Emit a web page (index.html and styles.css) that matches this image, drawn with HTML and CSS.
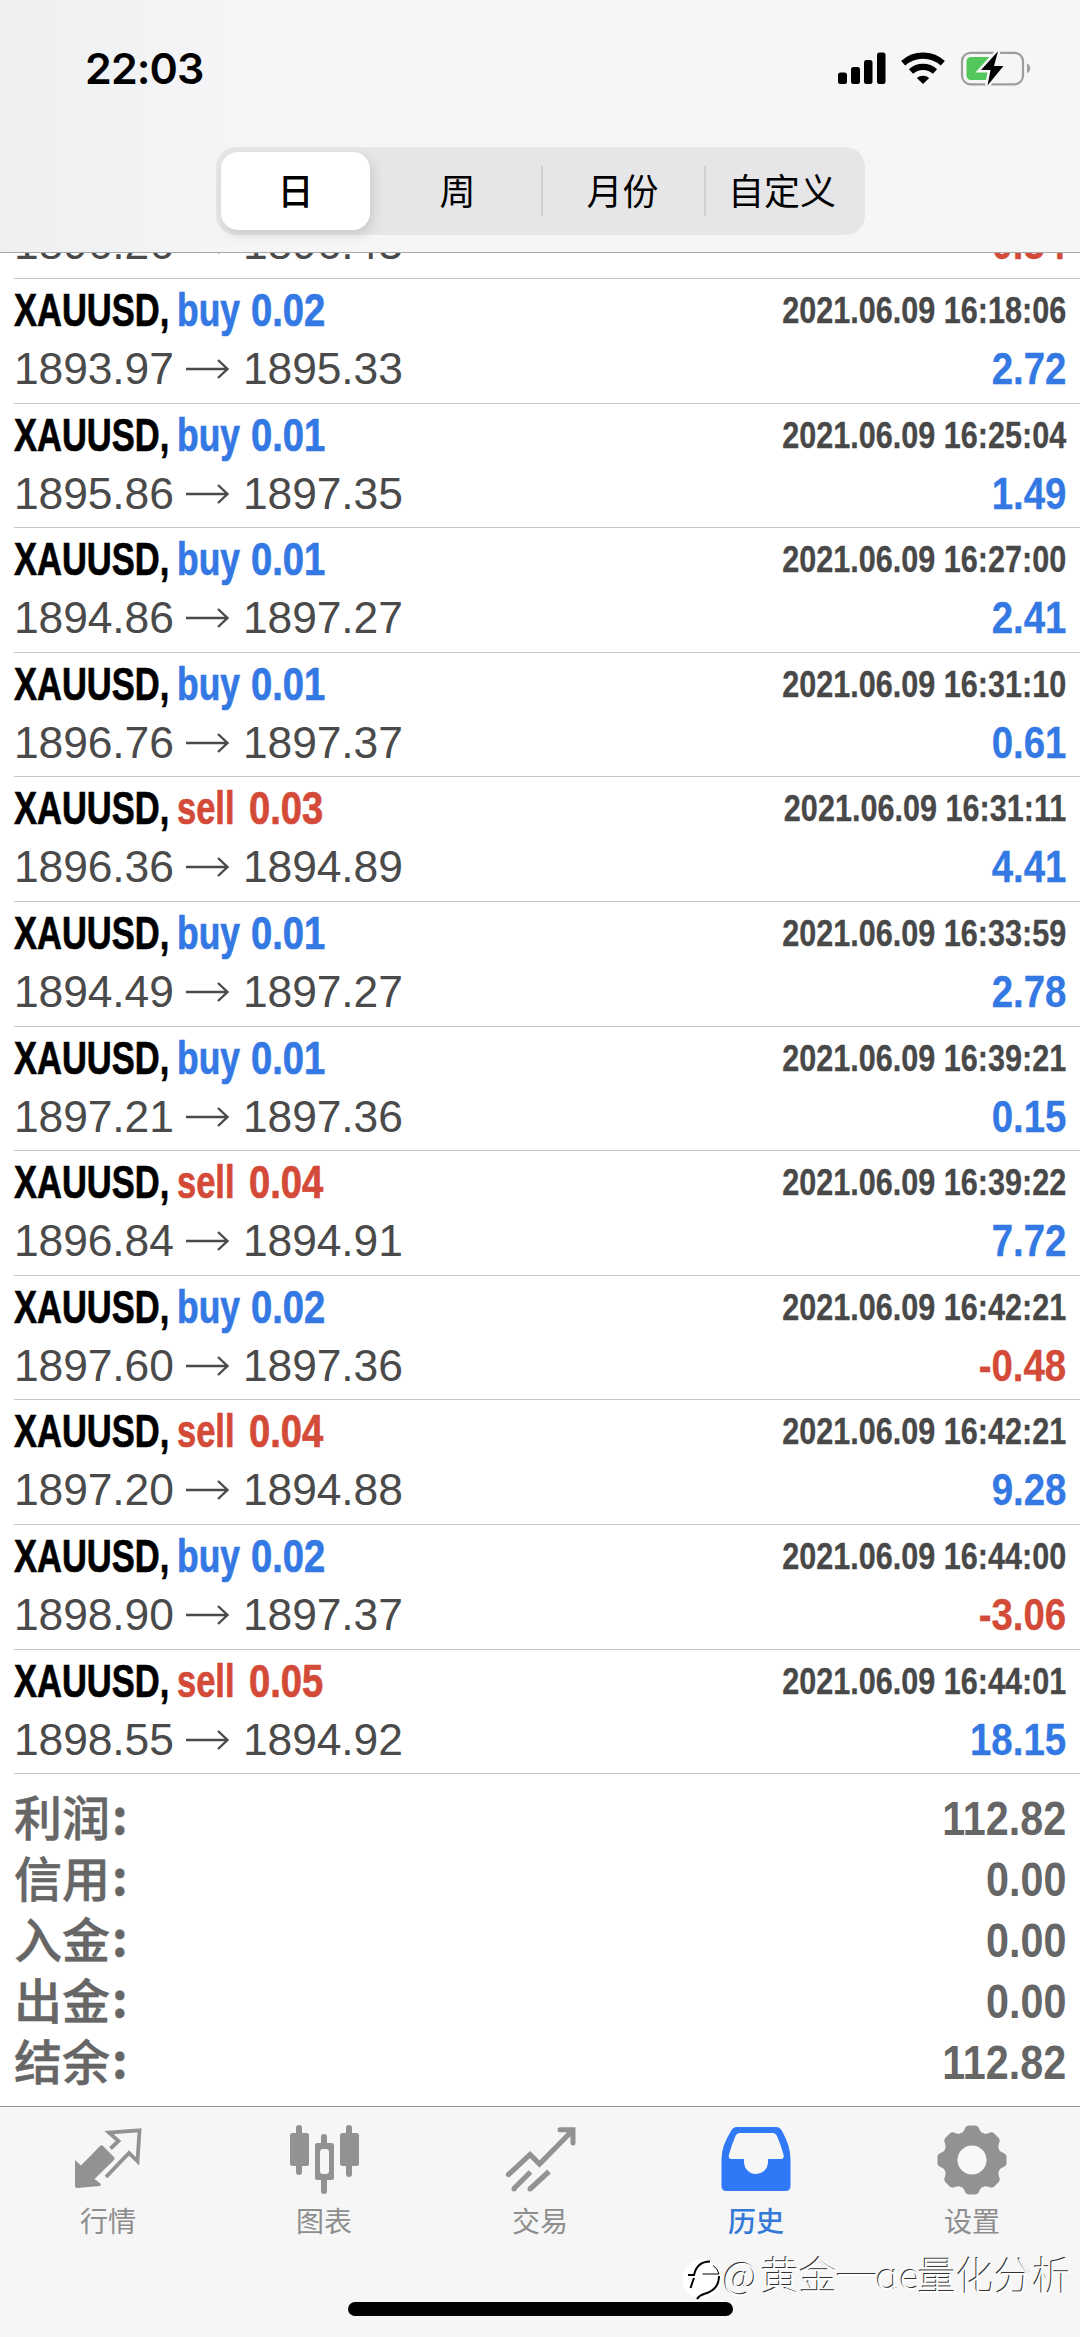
FILE: index.html
```html
<!DOCTYPE html>
<html lang="zh-CN">
<head>
<meta charset="utf-8">
<title>历史</title>
<link rel="stylesheet" href="styles.css">
</head>
<body>
<div class="screen">
  <header class="header">
    <div class="status">
      <span class="clock">22:03</span>
      <svg class="status-icons" width="194" height="36" viewBox="0 0 194 36">
        <g fill="#000">
          <rect x="1" y="22.500" width="9" height="11.500" rx="2.500"/>
          <rect x="14" y="17" width="9" height="17" rx="2.500"/>
          <rect x="27" y="10" width="8.500" height="24" rx="2.500"/>
          <rect x="40" y="2.500" width="8.500" height="31.500" rx="2.500"/>
        </g>
        <g fill="none" stroke="#000" stroke-width="6.200">
          <path d="M66.200 13.200a29.500 29.500 0 0 1 39.600 0"/>
          <path d="M74 21.500a18 18 0 0 1 24 0"/>
        </g>
        <path d="M79.800 28a9.500 9.500 0 0 1 12.400 0L86 34z"/>
        <rect x="125" y="2.800" width="61" height="31.500" rx="8.500" fill="none" stroke="#9d9da0" stroke-width="2.200"/>
        <path d="M190 13.500c4.300 1.500 4.300 8 0 9.500z" fill="#9d9da0"/>
        <rect x="129.500" y="7" width="26" height="23" rx="4.500" fill="#54c75c"/>
        <path d="M161 1.200L144 20h9.500L150.500 35.500 166.500 16H157z" fill="#000" stroke="#f6f6f7" stroke-width="5" paint-order="stroke"/>
      </svg>
    </div>
    <nav class="segments">
      <span class="segment active">日</span>
      <span class="segment week">周</span>
      <span class="segment">月份</span>
      <span class="segment">自定义</span>
    </nav>
  </header>

  <main class="history">
    <div class="deal clipped"><div class="bottom"><span class="price">1896.26</span><svg class="arrow" viewBox="0 0 44 20"><path d="M0 10H42M32 1l9.500 9-9.500 9"/></svg><span class="price">1896.43</span><span class="profit neg">-0.34</span></div></div>
    <div class="deal"><div class="top"><span class="sym">XAUUSD,</span><span class="side buy">buy</span><span class="vol buy">0.02</span><time>2021.06.09 16:18:06</time></div><div class="bottom"><span class="price">1893.97</span><svg class="arrow" viewBox="0 0 44 20"><path d="M0 10H42M32 1l9.500 9-9.500 9"/></svg><span class="price">1895.33</span><span class="profit">2.72</span></div></div>
    <div class="deal"><div class="top"><span class="sym">XAUUSD,</span><span class="side buy">buy</span><span class="vol buy">0.01</span><time>2021.06.09 16:25:04</time></div><div class="bottom"><span class="price">1895.86</span><svg class="arrow" viewBox="0 0 44 20"><path d="M0 10H42M32 1l9.500 9-9.500 9"/></svg><span class="price">1897.35</span><span class="profit">1.49</span></div></div>
    <div class="deal"><div class="top"><span class="sym">XAUUSD,</span><span class="side buy">buy</span><span class="vol buy">0.01</span><time>2021.06.09 16:27:00</time></div><div class="bottom"><span class="price">1894.86</span><svg class="arrow" viewBox="0 0 44 20"><path d="M0 10H42M32 1l9.500 9-9.500 9"/></svg><span class="price">1897.27</span><span class="profit">2.41</span></div></div>
    <div class="deal"><div class="top"><span class="sym">XAUUSD,</span><span class="side buy">buy</span><span class="vol buy">0.01</span><time>2021.06.09 16:31:10</time></div><div class="bottom"><span class="price">1896.76</span><svg class="arrow" viewBox="0 0 44 20"><path d="M0 10H42M32 1l9.500 9-9.500 9"/></svg><span class="price">1897.37</span><span class="profit">0.61</span></div></div>
    <div class="deal"><div class="top"><span class="sym">XAUUSD,</span><span class="side sell">sell</span><span class="vol sell">0.03</span><time>2021.06.09 16:31:11</time></div><div class="bottom"><span class="price">1896.36</span><svg class="arrow" viewBox="0 0 44 20"><path d="M0 10H42M32 1l9.500 9-9.500 9"/></svg><span class="price">1894.89</span><span class="profit">4.41</span></div></div>
    <div class="deal"><div class="top"><span class="sym">XAUUSD,</span><span class="side buy">buy</span><span class="vol buy">0.01</span><time>2021.06.09 16:33:59</time></div><div class="bottom"><span class="price">1894.49</span><svg class="arrow" viewBox="0 0 44 20"><path d="M0 10H42M32 1l9.500 9-9.500 9"/></svg><span class="price">1897.27</span><span class="profit">2.78</span></div></div>
    <div class="deal"><div class="top"><span class="sym">XAUUSD,</span><span class="side buy">buy</span><span class="vol buy">0.01</span><time>2021.06.09 16:39:21</time></div><div class="bottom"><span class="price">1897.21</span><svg class="arrow" viewBox="0 0 44 20"><path d="M0 10H42M32 1l9.500 9-9.500 9"/></svg><span class="price">1897.36</span><span class="profit">0.15</span></div></div>
    <div class="deal"><div class="top"><span class="sym">XAUUSD,</span><span class="side sell">sell</span><span class="vol sell">0.04</span><time>2021.06.09 16:39:22</time></div><div class="bottom"><span class="price">1896.84</span><svg class="arrow" viewBox="0 0 44 20"><path d="M0 10H42M32 1l9.500 9-9.500 9"/></svg><span class="price">1894.91</span><span class="profit">7.72</span></div></div>
    <div class="deal"><div class="top"><span class="sym">XAUUSD,</span><span class="side buy">buy</span><span class="vol buy">0.02</span><time>2021.06.09 16:42:21</time></div><div class="bottom"><span class="price">1897.60</span><svg class="arrow" viewBox="0 0 44 20"><path d="M0 10H42M32 1l9.500 9-9.500 9"/></svg><span class="price">1897.36</span><span class="profit neg">-0.48</span></div></div>
    <div class="deal"><div class="top"><span class="sym">XAUUSD,</span><span class="side sell">sell</span><span class="vol sell">0.04</span><time>2021.06.09 16:42:21</time></div><div class="bottom"><span class="price">1897.20</span><svg class="arrow" viewBox="0 0 44 20"><path d="M0 10H42M32 1l9.500 9-9.500 9"/></svg><span class="price">1894.88</span><span class="profit">9.28</span></div></div>
    <div class="deal"><div class="top"><span class="sym">XAUUSD,</span><span class="side buy">buy</span><span class="vol buy">0.02</span><time>2021.06.09 16:44:00</time></div><div class="bottom"><span class="price">1898.90</span><svg class="arrow" viewBox="0 0 44 20"><path d="M0 10H42M32 1l9.500 9-9.500 9"/></svg><span class="price">1897.37</span><span class="profit neg">-3.06</span></div></div>
    <div class="deal"><div class="top"><span class="sym">XAUUSD,</span><span class="side sell">sell</span><span class="vol sell">0.05</span><time>2021.06.09 16:44:01</time></div><div class="bottom"><span class="price">1898.55</span><svg class="arrow" viewBox="0 0 44 20"><path d="M0 10H42M32 1l9.500 9-9.500 9"/></svg><span class="price">1894.92</span><span class="profit">18.15</span></div></div>

    <dl class="totals">
      <div class="total"><dt>利润<i>:</i></dt><dd>112.82</dd></div>
      <div class="total"><dt>信用<i>:</i></dt><dd>0.00</dd></div>
      <div class="total"><dt>入金<i>:</i></dt><dd>0.00</dd></div>
      <div class="total"><dt>出金<i>:</i></dt><dd>0.00</dd></div>
      <div class="total"><dt>结余<i>:</i></dt><dd>112.82</dd></div>
    </dl>
  </main>

  <footer class="tabbar">
    <a class="tab">
      <svg width="72" height="72" viewBox="0 0 72 72">
        <path d="M3 35l6 5.500 19-19.500q1.500-1.500 3 0l11 11q1.200 1.500 0 3L22.500 54l6.500 5-1 2L5 63q-2 0-2-2z" fill="#929292"/>
        <path d="M38.500 23.500l8-7.500-9.500-8.500 30.500-2.200-2 31-8.500-8.300L34 52" fill="none" stroke="#929292" stroke-width="3.800"/>
      </svg>
      <span>行情</span>
    </a>
    <a class="tab">
      <svg width="72" height="72" viewBox="0 0 72 72" fill="#929292">
        <rect x="8" y="0" width="6" height="50" rx="3"/><rect x="2" y="8" width="19" height="33" rx="2.500"/>
        <rect x="58" y="0" width="6" height="52" rx="3"/><rect x="52" y="8" width="19" height="33" rx="2.500"/>
        <rect x="33" y="9" width="6" height="60" rx="3"/><rect x="27" y="18" width="19" height="37" rx="2.500"/>
        <rect x="32" y="24" width="9" height="25" rx="3" fill="#f6f6f6"/>
      </svg>
      <span>图表</span>
    </a>
    <a class="tab">
      <svg width="72" height="72" viewBox="0 0 72 72" fill="none" stroke="#929292" stroke-width="5.200">
        <path d="M4.500 49.500l21.500-20 9.500 9.500L66 8" stroke-linecap="round"/>
        <path d="M56 4.800H69V18" stroke-width="5" stroke-linecap="round"/><path d="M58 3H71V16z" fill="#929292" stroke="none"/>
        <path d="M9.500 64l17-17M26 64l19-17.500" /><circle cx="10" cy="64" r="1" stroke-width="3"/><circle cx="26" cy="64" r="1" stroke-width="3"/>
      </svg>
      <span>交易</span>
    </a>
    <a class="tab current">
      <svg width="72" height="72" viewBox="0 0 72 72">
        <path fill-rule="evenodd" fill="#2f79f7" d="M17 2H56q4 0 6 4 8.500 15 8.500 28V61q0 5-5 5H6.500q-5 0-5-5V34Q1.500 21 11 6q2-4 6-4zM20 8q-3 0-4.500 3Q12 19 9 29.500q-1 4.500 2 4.500H24v3a12 12 0 0 0 24 0v-3H61q3.500 0 2.500-4.500Q60.500 19 57 11q-1.500-3-4.500-3z"/>
      </svg>
      <span>历史</span>
    </a>
    <a class="tab">
      <svg width="72" height="72" viewBox="-36 -35 72 72" fill="#929292">
        <defs><path id="tooth" d="M-12-26.500Q-9-27-7.500-30.500-6-34.500-3-34.500H3Q6-34.500 7.500-30.500 9-27 12-26.500V0H-12z"/></defs>
        <circle r="28.500"/>
        <g><use href="#tooth"/><use href="#tooth" transform="rotate(45)"/><use href="#tooth" transform="rotate(90)"/><use href="#tooth" transform="rotate(135)"/><use href="#tooth" transform="rotate(180)"/><use href="#tooth" transform="rotate(225)"/><use href="#tooth" transform="rotate(270)"/><use href="#tooth" transform="rotate(315)"/></g>
        <circle r="14.500" fill="#f8f8f8"/>
      </svg>
      <span>设置</span>
    </a>
    <div class="home"></div>
    <div class="watermark">
      <svg width="42" height="46" viewBox="0 0 42 46">
        <circle cx="20" cy="21" r="19.500" fill="#fff"/>
        <g fill="none" stroke="#000" stroke-width="2">
          <path d="M28 3.500q-13 0-16 13.500H6M12 20q-1.500 4-3.500 10"/>
          <path d="M20.500 16H37q-1.500-6-6-8.500" stroke-width="1"/>
          <path d="M37 18q0 14-15 18-5 1.500-7 5"/>
        </g>
      </svg>
      <span class="at">@</span><span>黄金</span><span class="dash">一</span><span class="latin">ɑe</span><span>量化分析</span>
    </div>
  </footer>
</div>
</body>
</html>
```
FILE: styles.css
```css
* { box-sizing: border-box; }
body {
  margin: 0;
  background: #fff;
  font-family: "Liberation Sans", "Noto Sans CJK SC", sans-serif;
}
.screen {
  width: 1080px;
  height: 2337px;
  display: flex;
  flex-direction: column;
  overflow: hidden;
}
.header {
  flex: none;
  height: 253px;
  border-bottom: 1px solid #a9a9ac;
  background: linear-gradient(90deg, #f0f0f0 0, #f1f2f3 110px, #f5f5f7 220px, #f7f6f6 420px, #f6f6f7 1080px);
}
.status {
  height: 147px;
  padding: 50px 49px 0 85px;
  display: flex;
  justify-content: space-between;
  align-items: flex-start;
}
.clock {
  font: 600 43px/37px Inter, "Liberation Sans", sans-serif;
  letter-spacing: -.9px;
}
.segments {
  width: 649px;
  height: 88px;
  margin-left: 216px;
  padding: 5px;
  border-radius: 20px;
  background: #e6e6e8;
  display: grid;
  grid-template-columns: 149px 1fr 163px 161px;
}
.segment {
  display: flex;
  align-items: center;
  justify-content: center;
  padding-bottom: 4px;
  font: 400 36px/74px "Noto Sans CJK SC", sans-serif;
  background: linear-gradient(#cfcfd2, #cfcfd2) left center / 2px 50px no-repeat;
}
.segment.active {
  background: #fff;
  border-radius: 17px;
  font-weight: 500;
  box-shadow: 3px 5px 12px rgba(0, 0, 0, .12);
}
.segment.week { background: none; padding-left: 4px; }

/* dividers sit on the cell edges, 541px and 704px from the left of the screen */
.segments { grid-template-columns: 149px 171px 163px 1fr; }

.history { flex: 1; overflow: hidden; }
.deal {
  height: 124.6px;
  margin-left: 14px;
  padding-right: 14px;
  border-bottom: 1px solid #c6c6c8;
}
.deal.clipped {
  height: 26px;
  display: flex;
  flex-direction: column;
  justify-content: flex-end;
  overflow: hidden;
  padding-bottom: 7px;
}
.top, .bottom { display: flex; white-space: nowrap; }
.top {
  height: 64px;
  font-size: 46px;
  font-weight: 700;
  line-height: 62px;
  -webkit-text-stroke: .7px;
}
.sym { width: 163px; transform: scaleX(.75); transform-origin: left; }
.side { transform: scaleX(.77); transform-origin: left; }
.side.buy { width: 74px; }
.side.sell { width: 72px; transform: scaleX(.75); }
.vol { transform: scaleX(.83); transform-origin: left; }
.buy, .profit { color: #3478e4; }
.sell, .profit.neg { color: #d44a38; }
time {
  margin-left: auto;
  font-size: 36px;
  line-height: 63px;
  height: 63px;
  color: #484848;
  transform: scaleX(.85);
  transform-origin: right;
  -webkit-text-stroke: .3px;
}
.bottom {
  flex: none;
  height: 52.6px;
  line-height: 52.6px;
  font-size: 44.4px;
  color: #4a4a4a;
}
.price { width: 160px; letter-spacing: -.1px; }
.arrow {
  width: 44px;
  height: 20px;
  margin: 16px 13px 0 12px;
  fill: none;
  stroke: #4a4a4a;
  stroke-width: 2.4;
}
.profit {
  margin-left: auto;
  font-weight: 700;
  transform: scaleX(.865);
  transform-origin: right;
  -webkit-text-stroke: .3px;
}
.totals { margin: 14px 14px 0 14px; }
.total {
  display: flex;
  justify-content: space-between;
  height: 61px;
  line-height: 61px;
  color: #666;
}
.total dt { display: flex; font: 500 48px/55px "Noto Sans CJK SC", sans-serif; -webkit-text-stroke: .5px; }
.total dt i { font-style: normal; font-weight: 700; padding-left: 2px; line-height: 50px; }
.total dd {
  margin: 0;
  font-size: 48px;
  font-weight: 700;
  transform: scaleX(.86);
  transform-origin: right;
}

.tabbar {
  flex: none;
  position: relative;
  height: 231px;
  padding-top: 18px;
  border-top: 1px solid #929294;
  background: #f6f6f6;
  display: grid;
  grid-template-columns: repeat(5, 1fr);
  align-items: start;
}
.tab {
  display: flex;
  flex-direction: column;
  align-items: center;
  color: #8e8e8e;
  font: 400 28px/36px "Noto Sans CJK SC", sans-serif;
}
.tab span { margin-top: 5px; }
.tab.current { color: #3478d8; font-weight: 500; }
.home {
  position: absolute;
  left: 348px;
  top: 195px;
  width: 385px;
  height: 14px;
  border-radius: 7px;
  background: #000;
}
.watermark {
  position: absolute;
  left: 682px;
  top: 148px;
  display: flex;
  white-space: nowrap;
  color: #fff;
  font: 300 38.300px/38px "Noto Sans CJK SC", sans-serif;
  text-shadow: -1px -1px 0 #333;
}
.watermark svg { margin: 3px -1px 0 0; }
.watermark .at { width: 38px; }
.watermark .dash { transform: scaleX(1.1); }
.watermark .latin { width: 42px; }
```
